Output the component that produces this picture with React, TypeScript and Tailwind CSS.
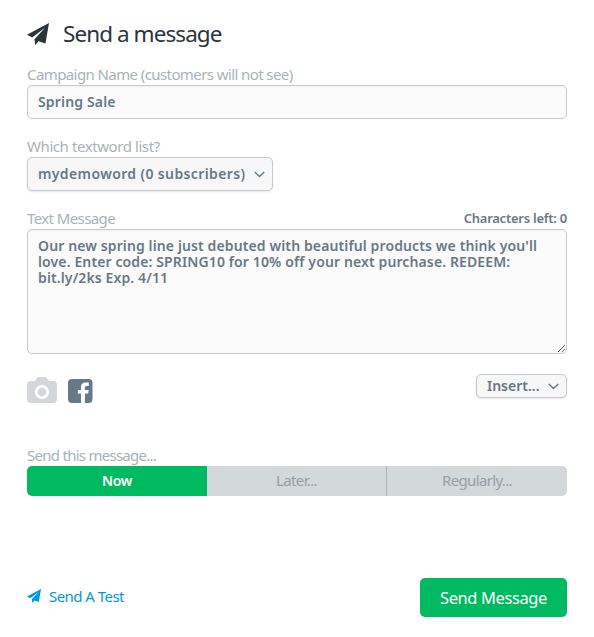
import { useState } from "react";
import type { ReactNode } from "react";

type SendTime = "now" | "later" | "regularly";

const defaultMessage = [
  "Our new spring line just debuted with beautiful products we think you'll",
  "love. Enter code: SPRING10 for 10% off your next purchase. REDEEM:",
  "bit.ly/2ks Exp. 4/11",
].join("\n");

function PlaneIcon({ className }: { className: string }) {
  return (
    <svg className={className} viewBox="0 0 22 22" fill="currentColor">
      <path d="M22 0 0 11.800l5.200 2.700L18.200 4.600 7.500 16.200 8.200 22l3.400-3.800 6.900 2.400z" />
    </svg>
  );
}

function Chevron() {
  return (
    <svg className="w-[11px] h-[7px] shrink-0" viewBox="0 0 11 7" fill="none" stroke="currentColor" strokeWidth="1.4">
      <path d="M.8 1l4.7 4.6L10.2 1" />
    </svg>
  );
}

function Label({ children }: { children: ReactNode }) {
  return (
    <span className="block h-[19px] text-[15px] leading-4 text-[#a9b2b9] whitespace-nowrap">
      {children}
    </span>
  );
}

export default function App() {
  const [name, setName] = useState("Spring Sale");
  const [message, setMessage] = useState(defaultMessage);
  const [sendTime, setSendTime] = useState<SendTime>("now");

  return (
    <div className="h-[637px] w-[594px] bg-white px-[27px] pt-[19px] font-['Noto_Sans','Open_Sans',sans-serif] text-[#677986]">
      <div className="flex h-[30px] items-center gap-3.5 text-[#29353d]">
        <PlaneIcon className="h-[22px] w-[22px]" />
        <h1 className="text-[22.5px] leading-[30px] tracking-[-0.93px]">Send a message</h1>
      </div>

      <div className="mt-[17px]">
        <Label><span className="tracking-[-0.59px]">Campaign Name (customers will not see)</span></Label>
        <input type="text" value={name} onChange={e => setName(e.target.value)}
          className="block h-[34px] w-full rounded-[5px] border border-[#c5cbd0] bg-[#fbfbfb] px-2.5 pb-0.5 text-[14px] font-semibold tracking-[0.16px] shadow-[inset_0_1px_2px_#0000000d] outline-none" />
      </div>

      <div className="mt-[19px]">
        <Label><span className="tracking-[-0.42px]">Which textword list?</span></Label>
        <button className="flex h-[34px] w-[246px] items-center justify-between rounded-[5px] border border-[#c5cbd0] bg-[#f7f7f7] pl-2.5 pr-[7px] text-[14px] font-semibold shadow-[0_1px_2px_#0000001a]">
          <span className="whitespace-nowrap pb-0.5 tracking-[0.38px]">mydemoword (0 subscribers)</span>
          <Chevron />
        </button>
      </div>

      <div className="mt-[19px]">
        <div className="flex justify-between">
          <Label><span className="tracking-[-0.6px]">Text Message</span></Label>
          <span className="text-[13px] font-semibold leading-4 tracking-[-0.25px]">Characters left: 0</span>
        </div>
        <textarea value={message} onChange={e => setMessage(e.target.value)}
          className="block h-[125px] w-full resize whitespace-pre overflow-hidden rounded-[5px] border border-[#c5cbd0] bg-[#fbfbfb] px-2.5 py-2 text-[14px] font-semibold leading-4 tracking-[0.12px] shadow-[inset_0_1px_2px_#0000000d] outline-none" />
      </div>

      {/* Attachments */}
      <div className="mt-5 flex h-[29px] items-start justify-between">
        <div className="flex h-full items-end gap-[11px]">
          <svg className="h-[26px] w-[30px]" viewBox="0 0 30 26">
            <path fill="#d2d7db" d="M4 4h4l1.600-2.600Q10.500 0 12 0h6q1.500 0 2.400 1.400L22 4h4q4 0 4 4v14q0 4-4 4H4q-4 0-4-4V8q0-4 4-4z" />
            <circle cx="15" cy="15" r="5.700" fill="none" stroke="#fff" strokeWidth="2.600" />
          </svg>
          <svg className="h-6 w-[25px]" viewBox="0 0 25 24">
            <rect width="24.500" height="24" rx="4" fill="#677986" />
            <path fill="#fff" d="M13 24v-9.500H9.800V11H13V8.500C13 5 14.800 3.600 17.600 3.600h3.200V7h-2c-1.400 0-1.900.7-1.900 1.900V11h3.800l-.5 3.500h-3.300V24z" />
          </svg>
        </div>
        <button className="flex h-6 w-[91px] items-center justify-between rounded-[5px] border border-[#c5cbd0] bg-[#f7f7f7] pl-2.5 pr-[7px] text-[14px] font-semibold shadow-[0_1px_2px_#0000001a]">
          <span className="pb-0.5">Insert...</span>
          <Chevron />
        </button>
      </div>

      {/* Schedule */}
      <div className="mt-11">
        <Label><span className="tracking-[-0.73px]">Send this message...</span></Label>
        <div className="flex h-[30px] overflow-hidden rounded-[5px]">
          {([
            { id: "now" as const, label: "Now", width: "w-[180px]" },
            { id: "later" as const, label: "Later...", width: "w-[180px] border-r border-[#acb4b9]" },
            { id: "regularly" as const, label: "Regularly...", width: "w-[180px]" },
          ]).map(opt => (
            <button key={opt.id} onClick={() => setSendTime(opt.id)}
              className={`${opt.width} pb-0.5 ${sendTime === opt.id
                ? "bg-[#00ba62] text-[14px] font-semibold tracking-[-0.3px] text-white"
                : "bg-[#d3d8db] text-[15px] tracking-[-0.65px] text-[#979fa4]"}`}>
              {opt.label}
            </button>
          ))}
        </div>
      </div>

      <div className="mt-[82px] flex items-center justify-between">
        <button className="flex items-center gap-2 pb-[3px] text-[15px] leading-5 tracking-[-0.55px] text-[#0098dc]">
          <PlaneIcon className="h-3.5 w-3.5" />
          <span>Send A Test</span>
        </button>
        <button className="h-[39px] w-[147px] rounded-[5px] bg-[#00ba62] text-[16.5px] leading-6 tracking-[-0.4px] text-white">
          Send Message
        </button>
      </div>
    </div>
  );
}
